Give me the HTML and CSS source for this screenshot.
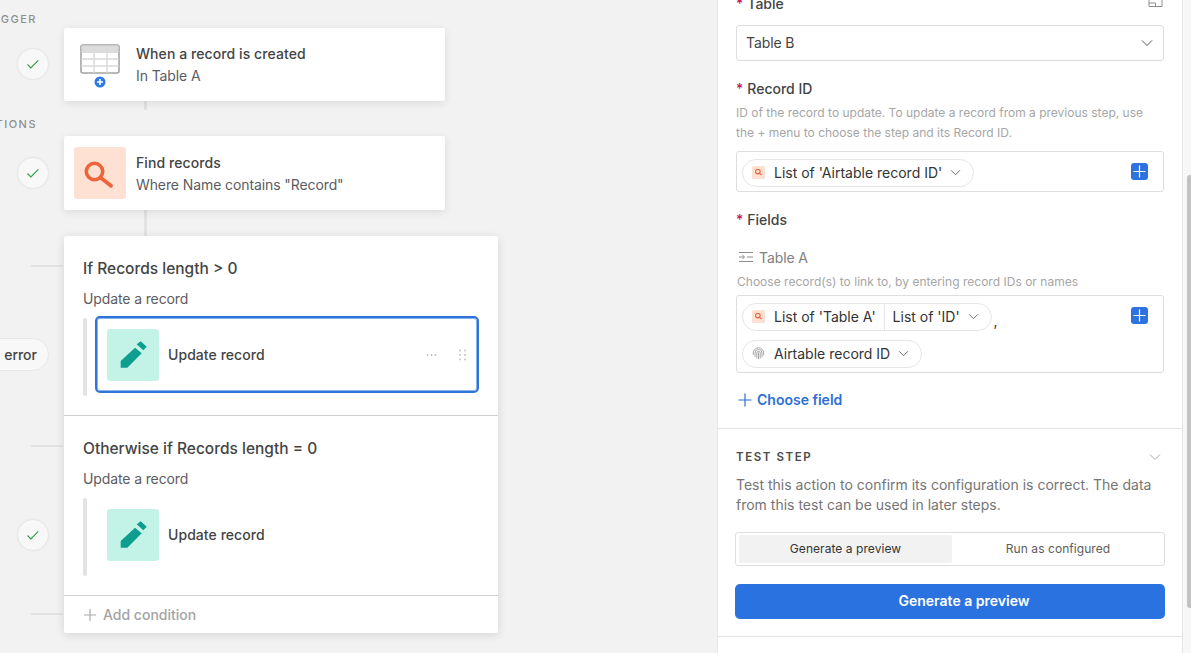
FILE: index.html
```html
<!DOCTYPE html>
<html lang="en">
<head>
<meta charset="utf-8">
<title>Automation editor</title>
<link rel="stylesheet" href="styles.css">
</head>
<body>
<div class="app">
  <main class="canvas">
    <div class="section-label trigger-label">TRIGGER</div>
    <div class="section-label actions-label">ACTIONS</div>

    <div class="wire wire-v wire-a"></div>
    <div class="wire wire-v wire-b"></div>
    <div class="wire wire-h wire-c"></div>
    <div class="wire wire-h wire-d"></div>
    <div class="wire wire-h wire-e"></div>

    <div class="status status-a"><svg width="16" height="16" viewBox="0 0 16 16"><path class="check" d="M2.5 8.5l3.4 3.4 7.4-7.6"/></svg></div>
    <div class="status status-b"><svg width="16" height="16" viewBox="0 0 16 16"><path class="check" d="M2.5 8.5l3.4 3.4 7.4-7.6"/></svg></div>
    <div class="status status-c"><svg width="16" height="16" viewBox="0 0 16 16"><path class="check" d="M2.5 8.5l3.4 3.4 7.4-7.6"/></svg></div>
    <div class="error-pill">error</div>

    <section class="card card-trigger">
      <svg class="table-icon" width="40" height="44" viewBox="0 0 40 44">
        <rect x="1" y="1" width="38" height="28" rx="2" fill="#fff" stroke="#a3a3a3" stroke-width="1.6"/>
        <rect x="1.5" y="1.5" width="37" height="7.5" fill="#dcdcdc"/>
        <path d="M1 15h38M1 22h38M14 9v20M27 9v20" stroke="#d9d9d9" stroke-width="1.4" fill="none"/>
        <circle cx="20" cy="38" r="5.5" fill="#2d7ae5"/>
        <path d="M20 35v6M17 38h6" stroke="#fff" stroke-width="1.6"/>
      </svg>
      <div class="card-text">
        <div class="card-title">When a record is created</div>
        <div class="card-sub">In Table A</div>
      </div>
    </section>

    <section class="card card-find">
      <div class="tile tile-orange">
        <svg width="52" height="52" viewBox="0 0 52 52"><circle cx="20.5" cy="24.5" r="8.2" fill="none" stroke="#ec6439" stroke-width="3.6"/><path d="M27 31l10 7.8" stroke="#ec6439" stroke-width="3.8" stroke-linecap="round"/></svg>
      </div>
      <div class="card-text card-text-low">
        <div class="card-title">Find records</div>
        <div class="card-sub">Where Name contains "Record"</div>
      </div>
    </section>

    <section class="conditions">
      <div class="branch">
        <h3 class="branch-title">If Records length &gt; 0</h3>
        <div class="branch-sub">Update a record</div>
        <div class="branch-row">
          <div class="branch-bar"></div>
          <div class="step step-selected">
            <div class="tile tile-teal">
              <svg width="52" height="52" viewBox="0 0 52 52"><path fill="#0d9e90" d="M13.7 32L28 18.7l6.7 5.6-14.4 14.4h-6.6zM29.7 15.3l4-3 6 5.4-3.4 3.6z"/></svg>
            </div>
            <span class="step-name">Update record</span>
            <svg class="step-tools" width="44" height="12" viewBox="0 0 44 12"><g fill="#bdbdbd"><circle cx="2.5" cy="6" r=".9"/><circle cx="6.5" cy="6" r=".9"/><circle cx="10.5" cy="6" r=".9"/><circle cx="35" cy="1.5" r=".9"/><circle cx="40" cy="1.5" r=".9"/><circle cx="35" cy="6" r=".9"/><circle cx="40" cy="6" r=".9"/><circle cx="35" cy="10.5" r=".9"/><circle cx="40" cy="10.5" r=".9"/></g></svg>
          </div>
        </div>
      </div>
      <div class="branch">
        <h3 class="branch-title">Otherwise if Records length = 0</h3>
        <div class="branch-sub">Update a record</div>
        <div class="branch-row">
          <div class="branch-bar"></div>
          <div class="step">
            <div class="tile tile-teal">
              <svg width="52" height="52" viewBox="0 0 52 52"><path fill="#0d9e90" d="M13.7 32L28 18.7l6.7 5.6-14.4 14.4h-6.6zM29.7 15.3l4-3 6 5.4-3.4 3.6z"/></svg>
            </div>
            <span class="step-name">Update record</span>
          </div>
        </div>
      </div>
      <div class="add-condition">
        <svg width="14" height="14" viewBox="0 0 14 14"><path d="M7 1v12M1 7h12" stroke="#ababab" stroke-width="1.2"/></svg>
        <span>Add condition</span>
      </div>
    </section>
  </main>

  <aside class="panel">
    <div class="form">
      <div class="label-row label-first">
        <label class="field-label"><span class="req">*</span>Table</label>
        <svg width="15" height="15" viewBox="0 0 15 15"><path d="M1 .5h13v13H1zM1 10h6.5v3.5" fill="none" stroke="#8f8f8f" stroke-width="1"/></svg>
      </div>
      <div class="select">
        <span>Table B</span>
        <svg width="12" height="8" viewBox="0 0 12 8"><path class="chev" d="M1 1.5l5 5 5-5"/></svg>
      </div>

      <label class="field-label label-record"><span class="req">*</span>Record ID</label>
      <p class="help help-record">ID of the record to update. To update a record from a previous step, use the + menu to choose the step and its Record ID.</p>
      <div class="token-box token-box-single">
        <div class="tokens">
          <div class="pill">
            <span class="mini-search"><svg width="13" height="13" viewBox="0 0 13 13"><circle cx="5.8" cy="5.6" r="2.3" fill="none" stroke="#e8643a" stroke-width="1.1"/><path d="M7.6 7.4l2 1.7" stroke="#e8643a" stroke-width="1.2"/></svg></span>
            <span class="pill-text">List of 'Airtable record ID'</span>
            <svg class="pill-chev" width="11" height="7" viewBox="0 0 12 8"><path class="chev" d="M1 1.5l5 5 5-5"/></svg>
          </div>
        </div>
        <button class="plus" type="button" aria-label="Add"><svg width="17" height="17" viewBox="0 0 17 17"><path d="M8.5 2.5v12M2.5 8.5h12" stroke="#fff" stroke-width="1.2"/></svg></button>
      </div>

      <label class="field-label label-fields"><span class="req">*</span>Fields</label>
      <div class="link-field">
        <svg width="16" height="12" viewBox="0 0 16 12"><path d="M1 1.5h14M9 6h6M1 10.5h14M1 6h5M4.5 4l2 2-2 2" fill="none" stroke="#8c8c8c" stroke-width="1"/></svg>
        <span>Table A</span>
      </div>
      <p class="help help-link">Choose record(s) to link to, by entering record IDs or names</p>
      <div class="token-box">
        <div class="tokens">
          <div class="token-line">
            <div class="pill">
              <span class="mini-search"><svg width="13" height="13" viewBox="0 0 13 13"><circle cx="5.8" cy="5.6" r="2.3" fill="none" stroke="#e8643a" stroke-width="1.1"/><path d="M7.6 7.4l2 1.7" stroke="#e8643a" stroke-width="1.2"/></svg></span>
              <span class="pill-text">List of 'Table A'</span>
              <span class="pill-divider"></span>
              <span class="pill-text">List of 'ID'</span>
              <svg class="pill-chev" width="11" height="7" viewBox="0 0 12 8"><path class="chev" d="M1 1.5l5 5 5-5"/></svg>
            </div>
            <span class="comma">,</span>
          </div>
          <div class="pill">
            <span class="mini-print"><svg width="13" height="13" viewBox="0 0 13 13"><g fill="none" stroke="#8f8f8f" stroke-width=".8"><path d="M1.3 8V6a5.2 5.2 0 0 1 10.4 0v2.5"/><path d="M3 10V6a3.5 3.5 0 0 1 7 0v4.5"/><path d="M4.8 11.5V6a1.7 1.7 0 0 1 3.4 0v5.5"/><path d="M6.5 5.5v6.8"/></g></svg></span>
            <span class="pill-text">Airtable record ID</span>
            <svg class="pill-chev" width="11" height="7" viewBox="0 0 12 8"><path class="chev" d="M1 1.5l5 5 5-5"/></svg>
          </div>
        </div>
        <button class="plus" type="button" aria-label="Add"><svg width="17" height="17" viewBox="0 0 17 17"><path d="M8.5 2.5v12M2.5 8.5h12" stroke="#fff" stroke-width="1.2"/></svg></button>
      </div>
      <div class="choose-field">
        <svg width="14" height="14" viewBox="0 0 14 14"><path d="M7 .5v13M.5 7h13" stroke="#2d6fd6" stroke-width="1.2"/></svg>
        <span>Choose field</span>
      </div>
    </div>

    <div class="test">
      <div class="test-head">
        <h4>TEST STEP</h4>
        <svg width="12" height="8" viewBox="0 0 12 8"><path d="M1 1.5l5 5 5-5" fill="none" stroke="#a8a8a8" stroke-width="1"/></svg>
      </div>
      <p class="test-copy">Test this action to confirm its configuration is correct. The data from this test can be used in later steps.</p>
      <div class="segmented">
        <div class="seg seg-active">Generate a preview</div>
        <div class="seg seg-other">Run as configured</div>
      </div>
      <button class="primary" type="button">Generate a preview</button>
    </div>
  </aside>

  <div class="rail"><div class="thumb"></div></div>
</div>
</body>
</html>
```

FILE: styles.css
```css
* { box-sizing: border-box; }

html, body {
  margin: 0;
  height: 653px;
  overflow: hidden;
}

body {
  font-family: Inter, "Liberation Sans", sans-serif;
  font-size: 14px;
  color: #333;
  background: #f2f2f2;
}

.app {
  display: flex;
  width: 1191px;
  height: 653px;
}

/* Free diagram canvas */
.canvas {
  position: relative;
  width: 717px;
  height: 653px;
  flex: none;
  overflow: hidden;
  background: #f2f2f2;
}

.section-label {
  position: absolute;
  left: -63px;
  width: 100px;
  text-align: right;
  font-size: 11px;
  line-height: 14px;
  font-weight: 500;
  letter-spacing: 1.5px;
  color: #8f8f8f;
}
.trigger-label { top: 12px; }
.actions-label { top: 117px; }

.wire { position: absolute; background: #e2e2e2; }
.wire-v { left: 144px; width: 3px; }
.wire-a { top: 100px; height: 10px; }
.wire-b { top: 209px; height: 28px; }
.wire-h { left: 31px; width: 32px; height: 2px; }
.wire-c { top: 265px; }
.wire-d { top: 445px; }
.wire-e { top: 613px; }

.status {
  position: absolute;
  left: 17px;
  width: 32px;
  height: 32px;
  display: flex;
  align-items: center;
  justify-content: center;
  border-radius: 50%;
  background: #f8f8f8;
  border: 1px solid #e8e8e8;
  box-shadow: 0 0 2px rgba(0, 0, 0, 0.05);
}
.status-a { top: 48px; }
.status-b { top: 157px; }
.status-c { top: 519px; }
.check { fill: none; stroke: #2f9e44; stroke-width: 1.1; }

.error-pill {
  position: absolute;
  left: -30px;
  top: 338px;
  width: 79px;
  height: 33px;
  padding-right: 11px;
  display: flex;
  align-items: center;
  justify-content: flex-end;
  border-radius: 17px;
  background: #f8f8f8;
  border: 1px solid #e8e8e8;
  font-weight: 500;
  color: #444;
}

.card {
  position: absolute;
  left: 64px;
  width: 381px;
  display: flex;
  align-items: center;
  background: #fff;
  border-radius: 2px;
  box-shadow: 0 2px 8px rgba(0, 0, 0, 0.1);
}
.card-trigger { top: 28px; height: 73px; padding-left: 16px; gap: 16px; }
.card-find { top: 136px; height: 74px; padding-left: 10px; gap: 10px; }
.table-icon { margin-top: 3px; flex: none; }
.card-text-low { margin-top: 2px; }

.card-title {
  font-weight: 500;
  line-height: 22px;
  letter-spacing: 0.08px;
  color: #444;
}
.card-sub {
  line-height: 22px;
  letter-spacing: -0.1px;
  color: #5c5c5f;
}

.tile {
  width: 52px;
  height: 52px;
  flex: none;
  border-radius: 3px;
}
.tile svg { display: block; }
.tile-orange { background: #ffe1d4; }
.tile-teal { background: #c3f3e7; }

.conditions {
  position: absolute;
  left: 64px;
  top: 236px;
  width: 434px;
  height: 397px;
  background: #fff;
  border-radius: 2px;
  box-shadow: 0 2px 10px rgba(0, 0, 0, 0.12);
}

.branch {
  height: 180px;
  padding: 23px 19px 0;
  border-bottom: 1px solid #cfcfcf;
}

.branch-title {
  margin: 0;
  font-size: 15.5px;
  font-weight: 500;
  line-height: 20px;
  color: #444;
}

.branch-sub {
  margin-top: 10px;
  line-height: 20px;
  letter-spacing: -0.12px;
  color: #5c5c5f;
}

.branch-row {
  display: flex;
  gap: 8px;
  height: 78px;
  margin-top: 9px;
}

.branch-bar {
  width: 4px;
  height: 78px;
  flex: none;
  border-radius: 2px;
  background: #e3e3e3;
}

.step {
  display: flex;
  align-items: center;
  gap: 9px;
  width: 384px;
  height: 77px;
  margin-top: -2px;
  padding: 0 8px 0 10px;
  border: 2px solid transparent;
  border-radius: 5px;
}
.step-selected {
  border-color: #2f72d8;
  box-shadow: inset 0 0 0 1px #8cb3f1;
}

.step-name {
  font-weight: 500;
  letter-spacing: 0.06px;
  color: #444;
}

.step-tools { margin-left: auto; flex: none; }

.add-condition {
  display: flex;
  align-items: center;
  gap: 6px;
  height: 37px;
  padding-left: 19px;
  font-weight: 500;
  color: #a3a3a3;
}

/* Right hand panel */
.panel {
  width: 466px;
  height: 653px;
  flex: none;
  overflow: hidden;
  background: #fff;
  border-left: 1px solid #e5e5e5;
  border-right: 1px solid #e5e5e5;
}

.form {
  height: 434px;
  padding: 0 18px;
  border-bottom: 1px solid #e3e3e3;
}

.label-row {
  display: flex;
  align-items: flex-start;
  justify-content: space-between;
}
.label-first { margin-top: -5px; }
.label-row svg { margin: -2px 1px 0 0; }

.field-label {
  display: block;
  font-weight: 500;
  line-height: 18px;
  color: #444;
}
.req {
  margin-right: 4px;
  color: #c4185c;
}
.label-record { margin-top: 19px; }
.label-fields { margin-top: 19px; }

.select {
  display: flex;
  align-items: center;
  justify-content: space-between;
  height: 36px;
  margin-top: 12px;
  padding: 0 10px 1px 9px;
  border: 1px solid #dedede;
  border-radius: 3px;
  letter-spacing: -0.1px;
  color: #444;
}

.chev {
  fill: none;
  stroke: #555;
  stroke-width: 1;
}

.help {
  margin: 0;
  font-size: 12px;
  color: #a6a6a6;
}
.help-record {
  margin-top: 5px;
  line-height: 20px;
}
.help-link {
  margin-top: 8px;
  padding-left: 1px;
  line-height: 16px;
  letter-spacing: 0.02px;
}

.token-box {
  display: flex;
  justify-content: space-between;
  align-items: flex-start;
  margin-top: 5px;
  padding: 7px 15px 4px 5px;
  border: 1px solid #dedede;
  border-radius: 3px;
}
.token-box-single { margin-top: 8px; height: 41px; }

.tokens {
  display: flex;
  flex-direction: column;
  gap: 9px;
}

.token-line {
  display: flex;
  align-items: flex-end;
}

.pill {
  display: inline-flex;
  align-items: center;
  align-self: flex-start;
  height: 28px;
  padding: 0 12px 1px 9px;
  border: 1px solid #e6e6e6;
  border-radius: 14px;
  color: #333;
}

.mini-search {
  width: 13px;
  height: 13px;
  margin-right: 9px;
  background: #ffe1d4;
  border-radius: 1px;
}
.mini-print {
  width: 13px;
  height: 13px;
  margin-right: 9px;
}
.mini-search svg, .mini-print svg { display: block; }

.pill-chev { margin-left: 8px; }

.pill-divider {
  width: 1px;
  height: 26px;
  margin: 0 8px;
  background: #e6e6e6;
}

.comma {
  margin: 0 0 2px 2px;
  line-height: 16px;
}

.plus {
  width: 17px;
  height: 17px;
  padding: 0;
  margin-top: 4px;
  flex: none;
  border: 0;
  border-radius: 3px;
  background: #2d72e0;
}
.plus svg { display: block; }

.link-field {
  display: flex;
  align-items: center;
  gap: 5px;
  height: 18px;
  margin-top: 19px;
  padding-left: 2px;
  letter-spacing: -0.1px;
  color: #808080;
}

.choose-field {
  display: flex;
  align-items: center;
  gap: 5px;
  margin-top: 18px;
  padding-left: 2px;
  line-height: 18px;
  font-weight: 600;
  color: #2d6fd6;
}

.test {
  height: 208px;
  padding: 0 17px;
  border-bottom: 1px solid #e3e3e3;
}

.test-head {
  display: flex;
  align-items: center;
  justify-content: space-between;
  height: 36px;
  padding: 20px 4px 0 1px;
}
.test-head h4 {
  margin: 0;
  font-size: 11.5px;
  font-weight: 600;
  letter-spacing: 1.6px;
  color: #4a4a4a;
}

.test-copy {
  margin: 10px 0 0 1px;
  line-height: 20px;
  color: #757575;
}

.segmented {
  display: flex;
  height: 34px;
  margin-top: 17px;
  padding: 2px 3px;
  border: 1px solid #dedede;
  border-radius: 3px;
}

.seg {
  flex: 1;
  display: flex;
  align-items: center;
  justify-content: center;
  padding-bottom: 2px;
  border-radius: 2px;
  font-size: 12px;
  letter-spacing: 0.06px;
  color: #5c5c5c;
}
.seg-other { padding-left: 3px; }
.seg-active {
  flex: none;
  width: 213px;
  background: #f2f2f2;
  color: #333;
}

.primary {
  display: block;
  width: 100%;
  height: 35px;
  margin-top: 18px;
  padding: 0 0 3px 28px;
  border: 0;
  border-radius: 5px;
  background: #2a72e0;
  color: #fff;
  font: 600 14px Inter, "Liberation Sans", sans-serif;
}

.rail {
  position: relative;
  width: 9px;
  height: 653px;
  flex: none;
  background: #f7f7f7;
}

.thumb {
  position: absolute;
  left: 4px;
  top: 175px;
  width: 5px;
  height: 433px;
  border-radius: 3px 0 0 3px;
  background: #c2c2c2;
}
```
